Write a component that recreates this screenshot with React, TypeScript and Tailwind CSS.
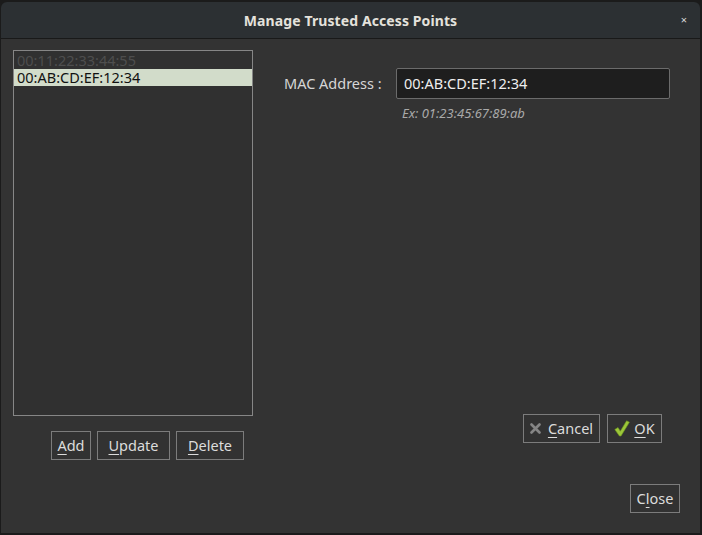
import React from 'react';

const font = { fontFamily: '"Noto Sans", "DejaVu Sans", sans-serif' };

function Mn({ text, idx }: { text: string; idx: number }) {
  return (
    <span>
      {text.slice(0, idx)}
      <span className="underline underline-offset-[3px] decoration-1">{text[idx]}</span>
      {text.slice(idx + 1)}
    </span>
  );
}

function Btn({ children, className = '' }: { children: React.ReactNode; className?: string }) {
  return (
    <button
      className={`h-[29px] border border-[#7c7c7c] bg-[#323232] text-[#dcdcdc] text-[14.5px] flex items-center justify-center ${className}`}
    >
      {children}
    </button>
  );
}

export default function App() {
  const macs = ['00:11:22:33:44:55', '00:AB:CD:EF:12:34'];
  const selected = 1;

  return (
    <div className="w-[702px] h-[535px] bg-[#1b1b1b] pt-[2px] pl-[1px] overflow-hidden" style={font}>
      <div className="w-[699px] h-[531px] flex flex-col rounded-t-[6px] overflow-hidden">
        {/* title bar */}
        <div className="h-[37px] bg-[#2c3033] border-b border-[#191919] flex items-center justify-center relative shrink-0">
          <span className="text-[14px] font-bold text-[#e4e2dc] tracking-[0.1px]">Manage Trusted Access Points</span>
          <span className="absolute right-[13px] top-[10px] text-[11px] text-[#d8d8d8]">×</span>
        </div>

        {/* body */}
        <div className="flex-1 bg-[#333333] flex flex-col pl-[12px] pr-[20px] pt-[11px] pb-[20px]">
          <div className="flex">
            <div className="w-[240px] flex flex-col">
              <div className="h-[366px] border border-[#868686] bg-[#303030] pt-px">
                {macs.map((m, i) => (
                  <div
                    key={m}
                    className={`h-[17px] pl-[3px] text-[14.5px] leading-[17px] ${
                      i === selected ? 'bg-[#d2dcca] text-[#111]' : 'text-[#4e4e4e]'
                    }`}
                  >
                    {m}
                  </div>
                ))}
              </div>
              <div className="flex justify-end gap-[6px] mt-[15px] pr-[9px]">
                <Btn className="w-[40px]"><Mn text="Add" idx={0} /></Btn>
                <Btn className="w-[73px]"><Mn text="Update" idx={0} /></Btn>
                <Btn className="w-[68px]"><Mn text="Delete" idx={0} /></Btn>
              </div>
            </div>

            <div className="flex-1 flex flex-col pl-[31px] pr-[10px]">
              <div className="flex items-center mt-[18px]">
                <span className="w-[112px] text-[14.5px] text-[#d6d6d6]">MAC Address :</span>
                <div className="flex-1 h-[31px] bg-[#1e1e1e] border border-[#6b6b6b] rounded-[2px] flex items-center pl-[7px] text-[14.5px] text-[#eeeeee]">
                  00:AB:CD:EF:12:34
                </div>
              </div>
              <div className="pl-[118px] mt-[5px] text-[13px] italic text-[#a9a9a9]">Ex: 01:23:45:67:89:ab</div>

              <div className="mt-auto mb-[17px] flex justify-end gap-[7px] pr-[8px]">
                <Btn className="w-[77px] gap-[7px] h-[28px]">
                  <svg width="11" height="11" viewBox="0 0 11 11">
                    <path d="M1.5 1.5 L9.5 9.5 M9.5 1.5 L1.5 9.5" stroke="#858585" strokeWidth="2.6" strokeLinecap="round" />
                  </svg>
                  <Mn text="Cancel" idx={0} />
                </Btn>
                <Btn className="w-[55px] gap-[4px] h-[28px]">
                  <svg width="16" height="17" viewBox="0 0 16 17">
                    <path d="M0.8 9.5 L4 7.6 L6.3 11.2 L12.6 0.8 L15.4 2.2 L7 16 L5.4 16 Z" fill="#9cc63a" stroke="#6e9a1c" strokeWidth="0.6" strokeLinejoin="round" />
                  </svg>
                  <Mn text="OK" idx={0} />
                </Btn>
              </div>
            </div>
          </div>

          <div className="flex justify-end mt-auto">
            <Btn className="w-[50px] h-[28px]"><Mn text="Close" idx={1} /></Btn>
          </div>
        </div>
      </div>
    </div>
  );
}
